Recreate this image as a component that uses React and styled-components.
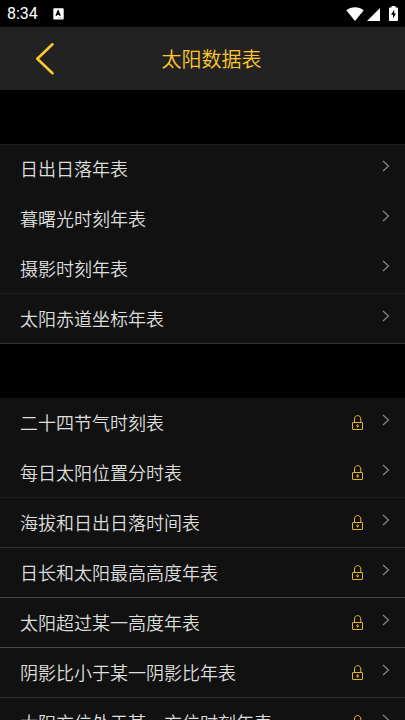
import React from 'react'
import styled, { createGlobalStyle } from 'styled-components'

const colors = {
  accent: '#fdc82f',
  bar: '#222222',
  row: '#111111',
  text: '#dedede',
  arrow: '#8c8c8c',
}

const lines = {
  none: '#111111',
  faint: '#1c1c1c',
  soft: '#333333',
  strong: '#484848',
}

const sections = [
  {
    id: 'basic',
    top: 'faint',
    items: [
      { label: '日出日落年表', line: 'none' },
      { label: '暮曙光时刻年表', line: 'none' },
      { label: '摄影时刻年表', line: 'faint' },
      { label: '太阳赤道坐标年表', line: 'soft' },
    ],
  },
  {
    id: 'locked',
    top: 'none',
    items: [
      { label: '二十四节气时刻表', line: 'none', locked: true },
      { label: '每日太阳位置分时表', line: 'faint', locked: true },
      { label: '海拔和日出日落时间表', line: 'soft', locked: true },
      { label: '日长和太阳最高高度年表', line: 'strong', locked: true },
      { label: '太阳超过某一高度年表', line: 'strong', locked: true },
      { label: '阴影比小于某一阴影比年表', line: 'soft', locked: true },
      { label: '太阳方位处于某一方位时刻年表', line: 'soft', locked: true },
    ],
  },
]

const GlobalStyle = createGlobalStyle`
  * {
    box-sizing: border-box;
  }

  body {
    margin: 0;
    background: #000;
    font-family: Roboto, 'Noto Sans CJK SC', sans-serif;
  }
`

const Screen = styled.div`
  display: flex;
  flex-direction: column;
  height: 100vh;
  background: #000;
`

const StatusBar = styled.div`
  display: flex;
  flex: none;
  align-items: center;
  justify-content: space-between;
  height: 27px;
  padding: 0 7px;
  color: #fff;
`

const StatusGroup = styled.div`
  display: flex;
  align-items: center;
  gap: ${props => props.$gap};
`

const Clock = styled.span`
  font-size: 16px;
  font-weight: 400;
  line-height: 28px;
`

const BatterySlot = styled.span`
  display: flex;
  margin-left: 6px;
`

const Header = styled.header`
  display: grid;
  flex: none;
  grid-template-columns: 80px 1fr 71px;
  align-items: center;
  height: 63px;
  padding-left: 9px;
  background: ${colors.bar};
`

const BackButton = styled.button`
  display: flex;
  align-items: center;
  justify-content: center;
  width: 72px;
  height: 63px;
  padding: 0;
  border: 0;
  background: none;
  color: ${colors.accent};
  cursor: pointer;
`

const Title = styled.h1`
  margin: 0;
  padding-top: 2px;
  color: ${colors.accent};
  font-size: 20px;
  font-weight: 350;
  line-height: 30px;
  text-align: center;
`

const Content = styled.main`
  flex: 1;
  min-height: 0;
  overflow-y: auto;
  scrollbar-width: none;
`

const Section = styled.ul`
  margin: 54px 0 0;
  padding: 0;
  background: ${colors.row};
  box-shadow: inset 0 1px 0 ${props => lines[props.$top]};
  list-style: none;
`

const Row = styled.li`
  border-bottom: 1px solid ${props => lines[props.$line]};
`

const RowLink = styled.a`
  display: flex;
  align-items: center;
  height: 49px;
  padding: 0 15px 0 20px;
  color: ${colors.text};
  font-size: 18px;
  font-weight: 350;
  line-height: 26px;
  text-decoration: none;
`

const Label = styled.span`
  flex: 1;
  padding-top: 2px;
  white-space: nowrap;
`

const ArrowSlot = styled.span`
  display: flex;
  margin-left: 18px;
  padding-bottom: 6px;
  color: ${colors.arrow};
`

const BackIcon = () =>
  <svg width="20" height="34" viewBox="0 0 20 34" fill="none">
    <path
      d="M17.5 2.3L2.3 16.8L17.5 31.3"
      stroke="currentColor"
      strokeWidth="2.6"
      strokeLinecap="round"
      strokeLinejoin="round"
    />
  </svg>

const KeyboardIcon = () =>
  <svg width="11" height="12" viewBox="0 0 11 12">
    <rect x="0.3" y="0.2" width="10.4" height="11.4" rx="0.8" fill="#fff" />
    <path
      d="M3 7.8L5.1 3L7.2 7.8M3.8 6.3H6.5"
      fill="none"
      stroke="#000"
      strokeWidth="1.4"
    />
    <path d="M5.2 10H6.2M7 10H8M8.7 10H9.5" stroke="#000" strokeWidth="0.5" />
  </svg>

const WifiIcon = () =>
  <svg width="18" height="14" viewBox="0 0 18 14">
    <path d="M0.3 3.2C5 -0.8 13 -0.8 17.7 3.2L9 14Z" fill="#fff" />
  </svg>

const SignalIcon = () =>
  <svg width="13" height="14" viewBox="0 0 13 14">
    <path d="M13 1V14H0Z" fill="#fff" />
  </svg>

const BatteryIcon = () =>
  <svg width="9" height="15" viewBox="0 0 9 15">
    <path
      d="M2.5 0H6.5V1.5H8C8.6 1.5 9 1.9 9 2.5V14C9 14.6 8.6 15 8 15H1C0.4 15 0 14.6 0 14V2.5C0 1.9 0.4 1.5 1 1.5H2.5Z"
      fill="#fff"
    />
    <path d="M5.2 3.8L2 8.8H4V12.6L7 7.6H5.2Z" fill="#000" />
  </svg>

const LockIcon = () =>
  <svg width="12" height="16" viewBox="0 0 12 16" fill="none" stroke={colors.accent}>
    <rect x="0.5" y="7.5" width="10" height="7" rx="0.5" strokeWidth="0.9" />
    <path d="M2.5 7.5V4C2.5 1.8 4 0.6 5.7 0.6C7.4 0.6 8.8 1.8 8.8 4V7.5" strokeWidth="0.9" />
    <path d="M5.7 11V12.5" strokeWidth="0.9" />
    <circle cx="5.6" cy="10.7" r="0.9" strokeWidth="0.9" />
  </svg>

const ArrowIcon = () =>
  <svg width="8" height="12" viewBox="0 0 8 12" fill="none">
    <path d="M1 1L6.5 6L1 11" stroke="currentColor" strokeWidth="1.1" />
  </svg>

const App = () =>
  <Screen>
    <GlobalStyle />
    <StatusBar>
      <StatusGroup $gap="15px">
        <Clock>8:34</Clock>
        <KeyboardIcon />
      </StatusGroup>
      <StatusGroup $gap="3px">
        <WifiIcon />
        <SignalIcon />
        <BatterySlot>
          <BatteryIcon />
        </BatterySlot>
      </StatusGroup>
    </StatusBar>
    <Header>
      <BackButton type="button" aria-label="返回">
        <BackIcon />
      </BackButton>
      <Title>太阳数据表</Title>
    </Header>
    <Content>
      {sections.map(section =>
        <Section key={section.id} $top={section.top}>
          {section.items.map(item =>
            <Row key={item.label} $line={item.line}>
              <RowLink href="#">
                <Label>{item.label}</Label>
                {item.locked && <LockIcon />}
                <ArrowSlot>
                  <ArrowIcon />
                </ArrowSlot>
              </RowLink>
            </Row>
          )}
        </Section>
      )}
    </Content>
  </Screen>

export default App
